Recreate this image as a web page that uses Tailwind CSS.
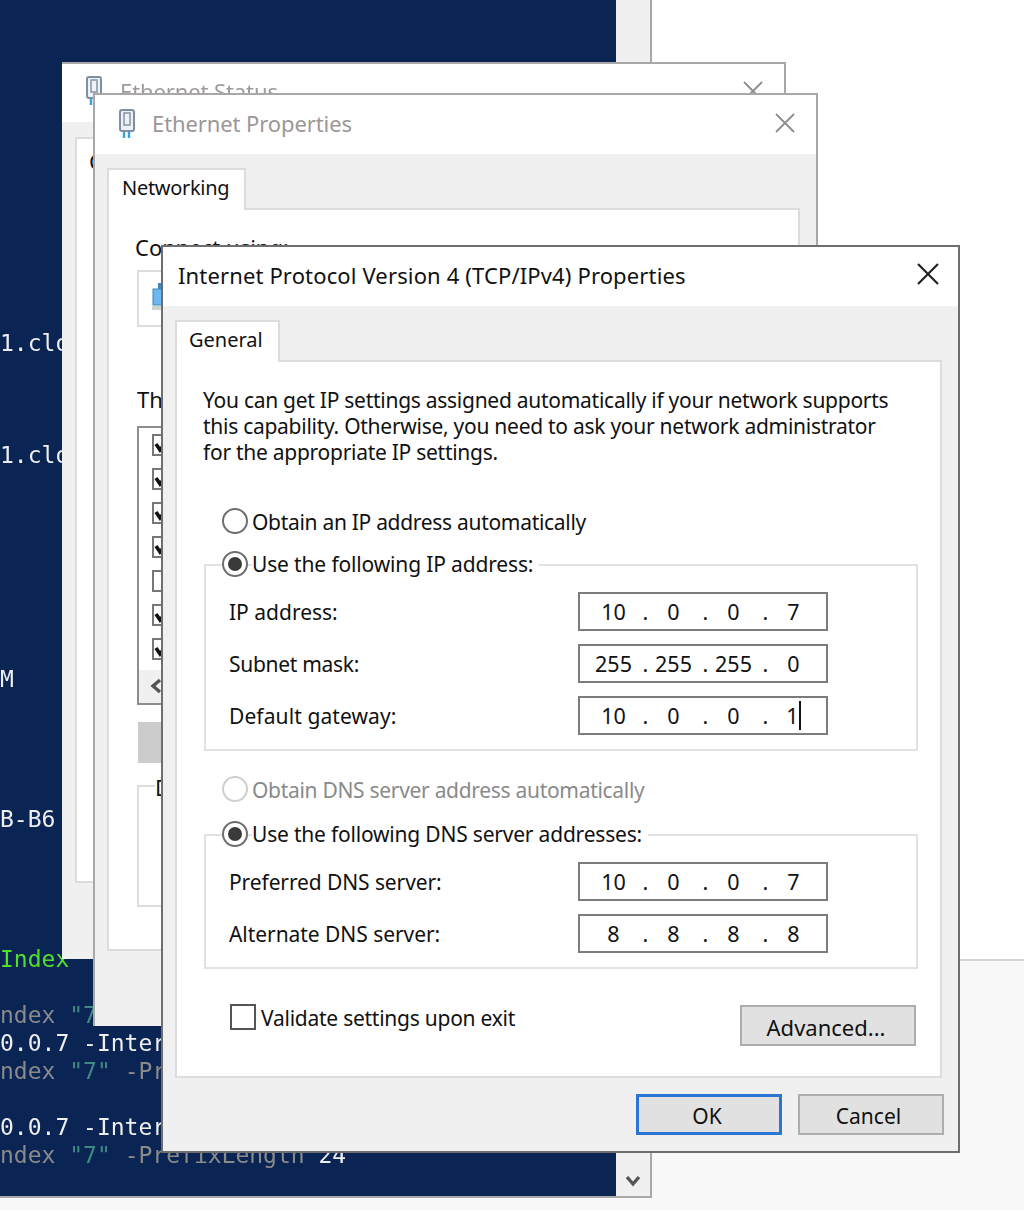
<!DOCTYPE html>
<html lang="en">
<head>
    <meta charset="UTF-8">
    <title>Internet Protocol Version 4 (TCP/IPv4) Properties</title>
    <script src="https://cdn.jsdelivr.net/npm/@tailwindcss/browser@4"></script>
</head>
<body class="bg-[#f8f8f8] overflow-hidden">
<div class="relative w-[1024px] h-[1210px] overflow-hidden blur-[0.6px] font-['Noto_Sans',sans-serif] text-[22px] text-[#111]">

    <!-- desktop behind -->
    <div class="h-[961px] bg-white border-b-2 border-[#d4d4d4]"></div>

    <!-- powershell console -->
    <div class="absolute left-0 top-0 w-[652px] h-[1198px] flex border-r-2 border-b-2 border-[#a8a8a8]">
        <pre class="w-[616px] bg-[#0a2554] pt-[21px] font-['DejaVu_Sans_Mono',monospace] text-[23px] leading-[28px] text-[#eeeeee] overflow-hidden">











1.cloud



1.cloud







M




B-B6




<span class="text-[#4fe02a]">Index</span>

<span class="text-[#8a8a8a]">ndex <span class="text-[#3f8a85]">"7"</span></span>
0.0.7 -InterfaceIndex
<span class="text-[#8a8a8a]">ndex <span class="text-[#3f8a85]">"7"</span> -PrefixLength 24</span>

0.0.7 -InterfaceIndex
<span class="text-[#8a8a8a]">ndex <span class="text-[#3f8a85]">"7"</span> -PrefixLength <span class="text-[#eeeeee]">24</span></span></pre>
        <div class="flex-1 bg-[#f0f0f0] flex flex-col justify-end items-center pb-[9px]">
            <svg class="w-[16px] h-[12px]" viewBox="0 0 16 12" fill="none" stroke="#555" stroke-width="3.4"><path d="M2 2l6 7 6-7"/></svg>
        </div>
    </div>

    <!-- ethernet status window -->
    <div class="absolute left-[62px] top-[62px] w-[724px] h-[897px] flex flex-col bg-[#f0f0f0] border-t-2 border-r-2 border-[#a8a8a8]">
        <div class="h-[58px] bg-white flex items-center pl-[23px] pr-[21px] text-[#a09a9a]">
            <svg class="w-[18px] h-[30px] -mt-[5px]" viewBox="0 0 18 30" fill="none"><rect x="2" y="1" width="14" height="21" rx="2" fill="#eef2f6" stroke="#7e8fa3" stroke-width="2"/><rect x="6" y="4" width="6" height="12" stroke="#8c99a8" stroke-width="1.6"/><path d="M6 23v6M11 23v6" stroke="#3aa0e0" stroke-width="2.4"/></svg>
            <span class="ml-[17px] -mt-[3px] tracking-[-0.1px]">Ethernet Status</span>
            <svg class="ml-auto w-[20px] h-[20px] -mt-[4px]" viewBox="0 0 20 20" stroke="#8d8d8d" stroke-width="1.8"><path d="M1 1l18 18M19 1L1 19"/></svg>
        </div>
        <div class="flex-1 pl-[13px] pt-[15px] pb-[76px]">
            <div class="h-full bg-white border-2 border-[#dcdcdc] pl-[12px] pt-[6px]">C</div>
        </div>
    </div>

    <!-- ethernet properties window -->
    <div class="absolute left-[93px] top-[93px] w-[725px] h-[933px] flex flex-col bg-[#f0f0f0] border-2 border-b-0 border-[#a8a8a8]">
        <div class="h-[59px] shrink-0 bg-white flex items-center pl-[23px] pr-[21px] text-[#9c9696]">
            <svg class="w-[18px] h-[30px] -mt-[1px]" viewBox="0 0 18 30" fill="none"><rect x="2" y="1" width="14" height="21" rx="2" fill="#eef2f6" stroke="#7e8fa3" stroke-width="2"/><rect x="6" y="4" width="6" height="12" stroke="#8c99a8" stroke-width="1.6"/><path d="M6 23v6M11 23v6" stroke="#3aa0e0" stroke-width="2.4"/></svg>
            <span class="ml-[16px] -mt-[3px] tracking-[-0.1px]">Ethernet Properties</span>
            <svg class="ml-auto w-[20px] h-[20px] -mt-[4px]" viewBox="0 0 20 20" stroke="#8d8d8d" stroke-width="1.8"><path d="M1 1l18 18M19 1L1 19"/></svg>
        </div>
        <div class="pl-[12px] pt-[14px] pr-[16px]">
            <div class="w-[139px] h-[42px] bg-white border-2 border-b-0 border-[#dcdcdc] pl-[13px] text-[20px] tracking-[-0.3px] leading-[35px] relative z-10 -mb-[2px]">Networking</div>
            <div class="h-[743px] bg-white border-2 border-[#dcdcdc] pl-[28px] pr-[10px] pt-[21px]">
                <div class="leading-[32px] -ml-[2px]">Connect using:</div>
                <div class="h-[57px] mt-[7px] border-2 border-[#dcdcdc] pl-[13px] pt-[9px]">
                    <svg class="w-[20px] h-[30px]" viewBox="0 0 20 30"><rect x="1" y="8" width="14" height="16" fill="#6db8ee" stroke="#3f86bd"/><rect x="6" y="2" width="4" height="6" fill="#3f86bd"/><rect x="0" y="25" width="18" height="4" fill="#cfd4cf"/></svg>
                </div>
                <div class="leading-[32px] mt-[56px]">This connection uses the following items:</div>
                <div class="h-[279px] mt-[11px] border-2 border-[#8d8d8d] flex flex-col pl-[13px] pt-[6px] gap-[12px] relative overflow-hidden">
                    <svg class="w-[21px] h-[22px] shrink-0" viewBox="0 0 21 22" fill="none"><rect x="1" y="1" width="19" height="20" stroke="#777" stroke-width="2"/><path d="M4 10l4 6 9-12" stroke="#111" stroke-width="3.6"/></svg>
                    <svg class="w-[21px] h-[22px] shrink-0" viewBox="0 0 21 22" fill="none"><rect x="1" y="1" width="19" height="20" stroke="#777" stroke-width="2"/><path d="M4 10l4 6 9-12" stroke="#111" stroke-width="3.6"/></svg>
                    <svg class="w-[21px] h-[22px] shrink-0" viewBox="0 0 21 22" fill="none"><rect x="1" y="1" width="19" height="20" stroke="#777" stroke-width="2"/><path d="M4 10l4 6 9-12" stroke="#111" stroke-width="3.6"/></svg>
                    <svg class="w-[21px] h-[22px] shrink-0" viewBox="0 0 21 22" fill="none"><rect x="1" y="1" width="19" height="20" stroke="#777" stroke-width="2"/><path d="M4 10l4 6 9-12" stroke="#111" stroke-width="3.6"/></svg>
                    <svg class="w-[21px] h-[22px] shrink-0" viewBox="0 0 21 22" fill="none"><rect x="1" y="1" width="19" height="20" stroke="#777" stroke-width="2"/></svg>
                    <svg class="w-[21px] h-[22px] shrink-0" viewBox="0 0 21 22" fill="none"><rect x="1" y="1" width="19" height="20" stroke="#777" stroke-width="2"/><path d="M4 10l4 6 9-12" stroke="#111" stroke-width="3.6"/></svg>
                    <svg class="w-[21px] h-[22px] shrink-0" viewBox="0 0 21 22" fill="none"><rect x="1" y="1" width="19" height="20" stroke="#777" stroke-width="2"/><path d="M4 10l4 6 9-12" stroke="#111" stroke-width="3.6"/></svg>
                    <div class="absolute left-0 right-0 bottom-0 h-[33px] bg-[#f0f0f0] pl-[11px] pb-[2px] flex items-center">
                        <svg class="w-[12px] h-[16px]" viewBox="0 0 12 16" fill="none" stroke="#555" stroke-width="3.4"><path d="M10 2L3 8l7 6"/></svg>
                    </div>
                </div>
                <div class="h-[41px] mt-[17px] ml-[1px] w-[160px] bg-[#cccccc]"></div>
                <div class="h-[122px] mt-[22px] border-2 border-[#dcdcdc] pl-[16px] leading-[0px]"><span class="bg-white">Description</span></div>
            </div>
        </div>
    </div>

    <!-- ipv4 properties dialog -->
    <div class="absolute left-[161px] top-[245px] w-[799px] h-[908px] flex flex-col bg-[#f0f0f0] border-2 border-[#6e6e6e]">
        <div class="h-[59px] shrink-0 bg-white flex items-center pl-[15px] pr-[19px]">
            <span class="-mt-[3px] tracking-[0.14px]">Internet Protocol Version 4 (TCP/IPv4) Properties</span>
            <svg class="ml-auto w-[22px] h-[22px] -mt-[6px]" viewBox="0 0 22 22" stroke="#222" stroke-width="2.2"><path d="M1 1l20 20M21 1L1 21"/></svg>
        </div>
        <div class="pl-[12px] pr-[16px] pt-[14px]">
            <div class="w-[105px] h-[42px] bg-white border-2 border-b-0 border-[#dcdcdc] pl-[12px] text-[20px] leading-[35px] relative z-10 -mb-[2px]">General</div>
            <div class="h-[718px] bg-white border-2 border-[#dcdcdc] pl-[27px] pr-[22px] pt-[25px] text-[21px]">
                <p class="-ml-[1px] leading-[26px] tracking-[-0.27px] whitespace-nowrap">You can get IP settings assigned automatically if your network supports<br>this capability. Otherwise, you need to ask your network administrator<br>for the appropriate IP settings.</p>

                <div class="mt-[42px] ml-[18px] h-[28px] flex items-center gap-[4px] tracking-[-0.3px]">
                    <span class="w-[26px] h-[26px] rounded-full border-2 border-[#6e6e6e] bg-white"></span>
                    <span class="pt-[4px]">Obtain an IP address automatically</span>
                </div>

                <div class="mt-[29px] h-[187px] border-2 border-[#e2e2e2] pl-[23px] pr-[88px]">
                    <div class="-mt-[16px] -ml-[7px] h-[28px] flex items-center gap-[4px] tracking-[-0.15px]">
                        <span class="w-[26px] h-[26px] rounded-full border-2 border-[#6e6e6e] bg-white flex items-center justify-center"><span class="w-[14px] h-[14px] rounded-full bg-[#3a3a3a]"></span></span>
                        <span class="bg-white pr-[6px] pt-[2px]">Use the following IP address:</span>
                    </div>
                    <div class="flex flex-col gap-[13px] mt-[14px]">
                        <div class="flex items-center justify-between"><span class="pt-[2px]">IP address:</span>
                            <div class="w-[250px] h-[39px] border-2 border-[#7c7c7c] flex items-center pl-[10px] pt-[2px] text-[21.5px]"><span class="w-[47px] text-center">10</span><span class="w-[13px] pl-[4px] text-center">.</span><span class="w-[47px] text-center">0</span><span class="w-[13px] pl-[4px] text-center">.</span><span class="w-[47px] text-center">0</span><span class="w-[13px] pl-[4px] text-center">.</span><span class="w-[47px] text-center">7</span></div>
                        </div>
                        <div class="flex items-center justify-between"><span class="pt-[2px] tracking-[-0.3px]">Subnet mask:</span>
                            <div class="w-[250px] h-[39px] border-2 border-[#7c7c7c] flex items-center pl-[10px] pt-[2px] text-[21.5px]"><span class="w-[47px] text-center">255</span><span class="w-[13px] pl-[4px] text-center">.</span><span class="w-[47px] text-center">255</span><span class="w-[13px] pl-[4px] text-center">.</span><span class="w-[47px] text-center">255</span><span class="w-[13px] pl-[4px] text-center">.</span><span class="w-[47px] text-center">0</span></div>
                        </div>
                        <div class="flex items-center justify-between"><span class="pt-[2px] tracking-[0.1px]">Default gateway:</span>
                            <div class="w-[250px] h-[39px] border-2 border-[#7c7c7c] flex items-center pl-[10px] pt-[2px] text-[21.5px]"><span class="w-[47px] text-center">10</span><span class="w-[13px] pl-[4px] text-center">.</span><span class="w-[47px] text-center">0</span><span class="w-[13px] pl-[4px] text-center">.</span><span class="w-[47px] text-center">0</span><span class="w-[13px] pl-[4px] text-center">.</span><span class="w-[47px] text-center"><span class="border-r-2 border-[#111]">1</span></span></div>
                        </div>
                    </div>
                </div>

                <div class="mt-[24px] ml-[18px] h-[28px] flex items-center gap-[4px] tracking-[-0.3px] text-[#8a8a8a]">
                    <span class="w-[26px] h-[26px] rounded-full border-2 border-[#cfcfcf] bg-white"></span>
                    <span class="pt-[4px]">Obtain DNS server address automatically</span>
                </div>

                <div class="mt-[31px] h-[135px] border-2 border-[#e2e2e2] pl-[23px] pr-[88px]">
                    <div class="-mt-[16px] -ml-[7px] h-[28px] flex items-center gap-[4px] tracking-[-0.2px]">
                        <span class="w-[26px] h-[26px] rounded-full border-2 border-[#6e6e6e] bg-white flex items-center justify-center"><span class="w-[14px] h-[14px] rounded-full bg-[#3a3a3a]"></span></span>
                        <span class="bg-white pr-[6px] pt-[2px]">Use the following DNS server addresses:</span>
                    </div>
                    <div class="flex flex-col gap-[13px] mt-[14px]">
                        <div class="flex items-center justify-between"><span class="pt-[2px] tracking-[-0.1px]">Preferred DNS server:</span>
                            <div class="w-[250px] h-[39px] border-2 border-[#7c7c7c] flex items-center pl-[10px] pt-[2px] text-[21.5px]"><span class="w-[47px] text-center">10</span><span class="w-[13px] pl-[4px] text-center">.</span><span class="w-[47px] text-center">0</span><span class="w-[13px] pl-[4px] text-center">.</span><span class="w-[47px] text-center">0</span><span class="w-[13px] pl-[4px] text-center">.</span><span class="w-[47px] text-center">7</span></div>
                        </div>
                        <div class="flex items-center justify-between"><span class="pt-[2px] tracking-[-0.05px]">Alternate DNS server:</span>
                            <div class="w-[250px] h-[39px] border-2 border-[#7c7c7c] flex items-center pl-[10px] pt-[2px] text-[21.5px]"><span class="w-[47px] text-center">8</span><span class="w-[13px] pl-[4px] text-center">.</span><span class="w-[47px] text-center">8</span><span class="w-[13px] pl-[4px] text-center">.</span><span class="w-[47px] text-center">8</span><span class="w-[13px] pl-[4px] text-center">.</span><span class="w-[47px] text-center">8</span></div>
                        </div>
                    </div>
                </div>

                <div class="mt-[36px] flex items-start justify-between pl-[26px] pr-[2px]">
                    <div class="-mt-[1px] h-[26px] flex items-center gap-[5px] tracking-[-0.25px]">
                        <span class="w-[26px] h-[26px] border-2 border-[#555] bg-white"></span>
                        <span class="pt-[4px]">Validate settings upon exit</span>
                    </div>
                    <button class="w-[176px] h-[41px] bg-[#e1e1e1] border-2 border-[#adadad] text-[22px] leading-none pt-[2px] pr-[4px]">Advanced...</button>
                </div>
            </div>
        </div>
        <div class="flex justify-end gap-[16px] pr-[14px] pt-[16px] text-[21px]">
            <button class="w-[146px] h-[41px] bg-[#e1e1e1] border-[3px] border-[#2a76d2] leading-none pt-[4px] pr-[4px]">OK</button>
            <button class="w-[146px] h-[41px] bg-[#e1e1e1] border-2 border-[#adadad] leading-none pt-[4px] pr-[5px]">Cancel</button>
        </div>
    </div>
</div>
</body>
</html>
